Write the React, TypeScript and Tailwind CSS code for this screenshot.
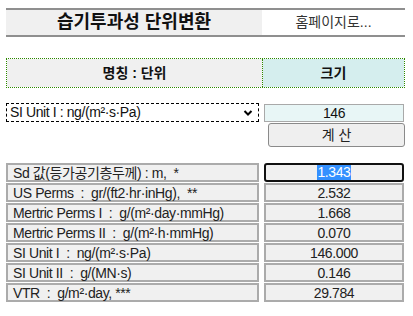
import React from "react";

const font = { fontFamily: '"Liberation Sans", Arial, "Noto Sans CJK KR", sans-serif' };

const results = [
  { label: "Sd 값(등가공기층두께) : m,  *", value: "1.343", focus: true },
  { label: "US Perms  :  gr/(ft2·hr·inHg),  **", value: "2.532" },
  { label: "Mertric Perms I  :  g/(m²·day·mmHg)", value: "1.668" },
  { label: "Mertric Perms II  :  g/(m²·h·mmHg)", value: "0.070" },
  { label: "SI Unit I  :  ng/(m²·s·Pa)", value: "146.000" },
  { label: "SI Unit II  :  g/(MN·s)", value: "0.146" },
  { label: "VTR  :  g/m²·day, ***", value: "29.784" },
];

export default function App() {
  return (
    <div className="w-[413px] h-[316px] bg-white text-[#111] pl-[6px] pt-[8px]" style={font}>
      {/* 제목 */}
      <div className="flex w-[399px] h-[29px] border-y-2 border-[#8f8f8f]">
        <div className="w-[256px] bg-[#f0f0f0] flex items-center justify-center text-[18px] font-bold">
          습기투과성 단위변환
        </div>
        <div className="flex-1 bg-white flex items-center justify-center text-[14px] text-[#333]">
          홈페이지로...
        </div>
      </div>

      {/* 머리글 */}
      <div className="flex w-[399px] h-[30px] mt-[21px] border border-dotted border-[#2d8a00]">
        <div className="w-[256px] bg-[#f0f0f0] flex items-center justify-center text-[14px] font-bold border-r border-dotted border-[#2d8a00]">
          명칭 : 단위
        </div>
        <div className="flex-1 bg-[#d5eeee] flex items-center justify-center text-[14px] font-bold">
          크기
        </div>
      </div>

      {/* 입력 */}
      <div className="flex items-start mt-[15px]">
        <div className="w-[253px] h-[19px] border border-dashed border-black flex items-center justify-between pl-[3px] pr-[5px] text-[14px] tracking-[-0.4px]">
          <span>SI Unit I : ng/(m²·s·Pa)</span>
          <svg width="10" height="8" viewBox="0 0 10 8">
            <path d="M1.5 2 L5 5.5 L8.5 2" fill="none" stroke="#000" strokeWidth="2" />
          </svg>
        </div>
        <div className="ml-[5px] flex flex-col">
          <div className="w-[140px] h-[18px] mt-px border border-[#a9a9a9] bg-[#e8f6f6] flex items-center justify-center text-[14px] tracking-[-0.4px]">
            146
          </div>
          <button className="ml-[4px] mt-px w-[137px] h-[24px] border border-[#8a8a8a] rounded-[3px] bg-[#efefef] text-[14px] text-[#222]">
            계 산
          </button>
        </div>
      </div>

      {/* 결과 */}
      <div className="mt-[16px] flex flex-col gap-px">
        {results.map((r, i) => (
          <div key={i} className="flex h-[19px]">
            <div className="w-[253px] border-2 border-[#ababab] bg-[#f0f0f0] flex items-center pl-[5px] text-[14px] tracking-[-0.4px] text-[#222] whitespace-pre leading-none">
              {r.label}
            </div>
            <div
              className={
                r.focus
                  ? "ml-[5px] w-[140px] border-2 border-[#111] rounded-[3px] bg-[#f0f0f0] flex items-center justify-center text-[14px] tracking-[-0.4px]"
                  : "ml-[5px] w-[140px] border-2 border-[#ababab] bg-[#f0f0f0] flex items-center justify-center text-[14px] tracking-[-0.4px] text-[#222] leading-none"
              }
            >
              {r.focus ? <span className="bg-[#3390ff] text-white leading-[15px]">{r.value}</span> : r.value}
            </div>
          </div>
        ))}
      </div>
    </div>
  );
}
